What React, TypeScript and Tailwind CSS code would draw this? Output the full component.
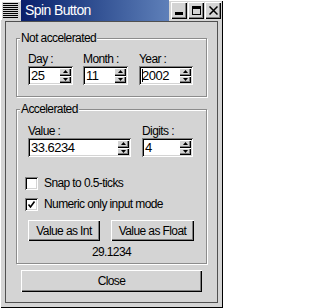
const raised = 'bg-[#d4d4d4] shadow-[inset_1px_1px_0_#fff,inset_-1px_-1px_0_#000,inset_-2px_-2px_0_#808080]';

function Arrow({ up }: { up?: boolean }) {
  return (
    <svg width="5" height="3" viewBox="0 0 5 3" className="block">
      <polygon points={up ? '2.5,0 5,3 0,3' : '0,0 5,0 2.5,3'} fill="#000" />
    </svg>
  );
}

function Spin({ value, width, caret }: { value: string; width: string; caret?: boolean }) {
  return (
    <div className={`flex h-[19px] ${width} p-px shadow-[inset_1px_1px_0_#808080,inset_-1px_-1px_0_#fff]`}>
      <div className="flex flex-1 p-px shadow-[inset_1px_1px_0_#000,inset_-1px_-1px_0_#d4d4d4]">
        <div className="flex flex-1 items-center bg-white pl-[1px] text-[13px] leading-[15px] tracking-[-0.5px] text-black">
          {caret ? <span className="-mr-px inline-block h-[13px] w-px bg-black" /> : null}
          {value}
        </div>
        <div className="flex w-[12px] flex-col bg-[#d4d4d4]">
          <div className={`flex flex-1 items-center justify-center ${raised}`}><Arrow up /></div>
          <div className={`flex flex-1 items-center justify-center ${raised}`}><Arrow /></div>
        </div>
      </div>
    </div>
  );
}

function Check({ checked, label }: { checked?: boolean; label: string }) {
  return (
    <div className="flex h-[14px] items-center">
      <div className="flex h-[13px] w-[13px] items-center justify-center bg-white shadow-[inset_1px_1px_0_#808080,inset_-1px_-1px_0_#fff,inset_2px_2px_0_#000,inset_-2px_-2px_0_#d4d4d4]">
        {checked ? (
          <svg width="9" height="9" viewBox="0 0 9 9" className="block">
            <path d="M1.5 4.5 L3.5 7 L7.5 1.5" stroke="#000" strokeWidth="1.6" fill="none" />
          </svg>
        ) : null}
      </div>
      <span className="ml-[6px]">{label}</span>
    </div>
  );
}

function Group({ title, className, children }: { title: string; className: string; children: React.ReactNode }) {
  return (
    <div className={`relative w-[191px] border border-[#8c8c8c] shadow-[inset_1px_1px_0_#fff,1px_1px_0_#fff] ${className}`}>
      <span className="absolute -top-[8px] left-[3px] bg-[#d4d4d4] px-px leading-[14px]">{title}</span>
      {children}
    </div>
  );
}

function TitleButton({ children }: { children: React.ReactNode }) {
  return (
    <div className={`flex h-[17px] w-[16px] items-center justify-center ${raised}`}>{children}</div>
  );
}

export default function App() {
  return (
    <div
      className="flex h-[308px] w-[223px] flex-col bg-[#d4d4d4] text-[12px] tracking-[-0.6px] text-black shadow-[inset_1px_1px_0_#fff,inset_-1px_-1px_0_#000]"
      style={{ fontFamily: '"Liberation Sans", Arial, sans-serif' }}
    >
      <div className="flex h-[21px] shrink-0 items-center">
        <div className="ml-px flex h-[19px] w-[19px] items-center justify-center shadow-[inset_1px_1px_0_#fff]">
          <svg width="15" height="15" viewBox="0 0 15 15" className="block">
            {[0, 2, 4, 6, 8, 10, 12, 14].map((y) => (
              <rect key={y} x="0" y={y} width="15" height="1" fill="#000" />
            ))}
          </svg>
        </div>
        <div className="ml-px flex h-[21px] w-[148px] items-center bg-gradient-to-r from-[#0a1f6b] to-[#5f80b9] pl-[4px] text-[14px] tracking-[-0.6px] text-white">
          Spin Button
        </div>
        <div className="ml-[2px] flex gap-px">
          <TitleButton>
            <div className="mt-[6px] h-[3px] w-[8px] bg-black" />
          </TitleButton>
          <TitleButton>
            <div className="h-[9px] w-[9px] border border-t-[3px] border-black" />
          </TitleButton>
          <TitleButton>
            <svg width="9" height="9" viewBox="0 0 9 9" className="block">
              <path d="M0.5 0.5 L8.5 8.5 M8.5 0.5 L0.5 8.5" stroke="#000" strokeWidth="1.5" />
            </svg>
          </TitleButton>
        </div>
      </div>

      <div className="mx-[5px] flex h-[282px] flex-col border border-[#505050]">
        <Group title="Not accelerated" className="ml-[10px] mt-[16px] px-[11px] pb-[11px] pt-[13px]">
          <div className="flex gap-[10px]">
            <div className="flex flex-col">
              <span className="leading-[14px]">Day :</span>
              <Spin value="25" width="w-[45px]" />
            </div>
            <div className="flex flex-col">
              <span className="leading-[14px]">Month :</span>
              <Spin value="11" width="w-[45px]" />
            </div>
            <div className="ml-px flex flex-col">
              <span className="leading-[14px]">Year :</span>
              <Spin value="2002" width="w-[54px]" caret />
            </div>
          </div>
        </Group>

        <Group title="Accelerated" className="ml-[10px] mt-[12px] pb-[4px] pt-[14px]">
          <div className="flex gap-[11px] pl-[11px]">
            <div className="flex flex-col">
              <span className="leading-[14px]">Value :</span>
              <Spin value="33.6234" width="w-[103px]" />
            </div>
            <div className="flex flex-col">
              <span className="leading-[14px]">Digits :</span>
              <Spin value="4" width="w-[51px]" />
            </div>
          </div>
          <div className="mt-[19px] pl-[8px]">
            <Check label="Snap to 0.5-ticks" />
          </div>
          <div className="mt-[7px] pl-[8px]">
            <Check checked label="Numeric only input mode" />
          </div>
          <div className="mt-[9px] flex gap-[11px] pl-[11px]">
            <button className={`h-[21px] w-[72px] ${raised}`}>Value as Int</button>
            <button className={`h-[21px] w-[83px] ${raised}`}>Value as Float</button>
          </div>
          <div className="mt-[4px] text-center leading-[14px]">29.1234</div>
        </Group>

        <button className={`ml-[15px] mt-[6px] h-[22px] w-[181px] ${raised}`}>Close</button>
      </div>
    </div>
  );
}
